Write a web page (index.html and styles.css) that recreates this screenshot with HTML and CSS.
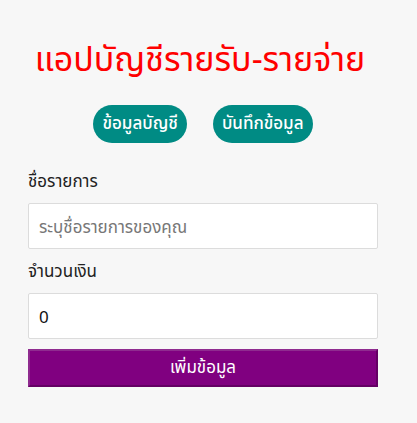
FILE: index.html
```html
<!DOCTYPE html>
<html lang="th">
<head>
<meta charset="utf-8">
<link rel="stylesheet" href="styles.css">
</head>
<body>
<div class="app">
  <h1 class="title">แอปบัญชีรายรับ-รายจ่าย</h1>
  <div class="nav">
    <button class="pill">ข้อมูลบัญชี</button>
    <button class="pill">บันทึกข้อมูล</button>
  </div>
  <form class="form">
    <label class="label">ชื่อรายการ</label>
    <input class="field" type="text" placeholder="ระบุชื่อรายการของคุณ">
    <label class="label">จำนวนเงิน</label>
    <input class="field" type="text" value="0">
    <button class="submit" type="button">เพิ่มข้อมูล</button>
  </form>
</div>
</body>
</html>
```
FILE: styles.css
```css
html, body {
  margin: 0;
  padding: 0;
  background: #f7f7f7;
}
body {
  font-family: "Noto Sans", "Noto Sans Thai", sans-serif;
  color: #222;
}
.app {
  width: 350px;
  padding: 0 0 0 28px;
  box-sizing: content-box;
}
.title {
  margin: 0 0 0 -6px;
  padding-top: 36px;
  height: 60px;
  box-sizing: content-box;
  text-align: center;
  color: #ff0000;
  font-size: 34px;
  font-weight: 400;
  line-height: 44px;
}
.nav {
  display: flex;
  justify-content: center;
  gap: 26px;
  margin-top: 9px;
}
.pill {
  height: 38px;
  padding: 0 9px;
  border: none;
  border-radius: 19px;
  background: #008b84;
  color: #fff;
  font-family: inherit;
  font-size: 17px;
  font-weight: 500;
}
.form {
  display: flex;
  flex-direction: column;
  margin-top: 26px;
}
.label {
  font-size: 17px;
  line-height: 24px;
  color: #222;
  margin-bottom: 10px;
}
.field {
  height: 46px;
  box-sizing: border-box;
  border: 1px solid #dcdcdc;
  border-radius: 2px;
  background: #fff;
  padding: 0 10px;
  font-family: inherit;
  font-size: 17px;
  color: #111;
  margin-bottom: 10px;
}
.field::placeholder {
  color: #777;
}
.submit {
  height: 38px;
  background: #800080;
  color: #fff;
  border: 2px solid;
  border-color: #8f2b8f #640064 #640064 #8f2b8f;
  font-family: inherit;
  font-size: 17px;
}
```
